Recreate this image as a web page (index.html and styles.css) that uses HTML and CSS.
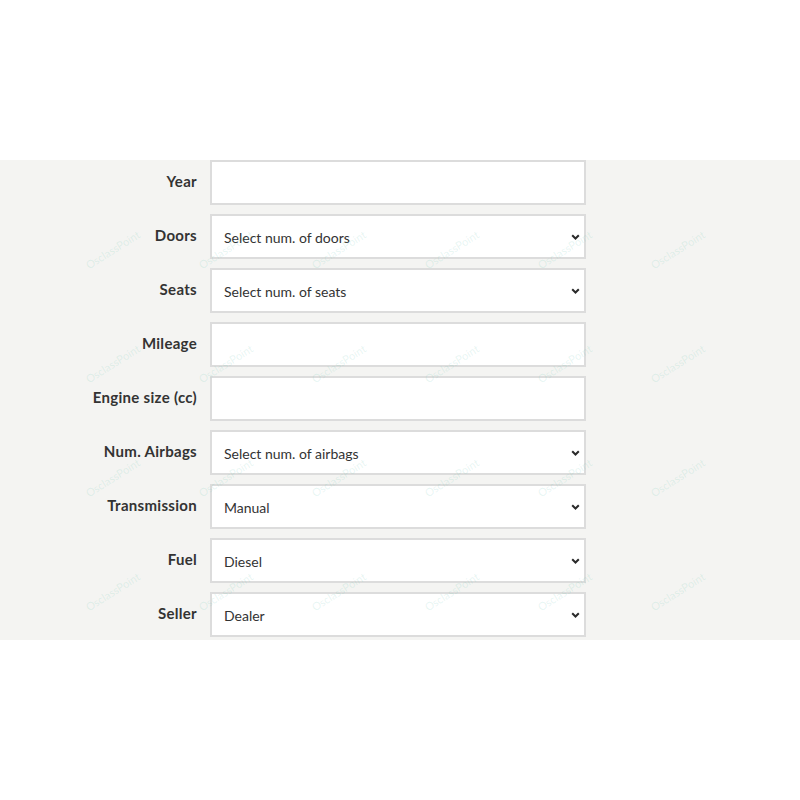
FILE: index.html
```html
<!DOCTYPE html>
<html>
<head>
<meta charset="utf-8">
<link rel="stylesheet" href="styles.css">
</head>
<body>
<div class="band">
  <div class="marks">
    <span>OsclassPoint</span><span>OsclassPoint</span><span>OsclassPoint</span><span>OsclassPoint</span><span>OsclassPoint</span><span>OsclassPoint</span>
    <span>OsclassPoint</span><span>OsclassPoint</span><span>OsclassPoint</span><span>OsclassPoint</span><span>OsclassPoint</span><span>OsclassPoint</span>
    <span>OsclassPoint</span><span>OsclassPoint</span><span>OsclassPoint</span><span>OsclassPoint</span><span>OsclassPoint</span><span>OsclassPoint</span>
    <span>OsclassPoint</span><span>OsclassPoint</span><span>OsclassPoint</span><span>OsclassPoint</span><span>OsclassPoint</span><span>OsclassPoint</span>
  </div>
  <div class="form">
    <div class="row"><label>Year</label><div class="box"></div></div>
    <div class="row"><label>Doors</label><div class="box sel"><span>Select num. of doors</span><svg width="9" height="6" viewBox="0 0 9 6"><path d="M1.2 1.2l3.3 3.3 3.3-3.3" fill="none" stroke="#2a2a2a" stroke-width="2"/></svg></div></div>
    <div class="row"><label>Seats</label><div class="box sel"><span>Select num. of seats</span><svg width="9" height="6" viewBox="0 0 9 6"><path d="M1.2 1.2l3.3 3.3 3.3-3.3" fill="none" stroke="#2a2a2a" stroke-width="2"/></svg></div></div>
    <div class="row"><label>Mileage</label><div class="box"></div></div>
    <div class="row"><label>Engine size (cc)</label><div class="box"></div></div>
    <div class="row"><label>Num. Airbags</label><div class="box sel"><span>Select num. of airbags</span><svg width="9" height="6" viewBox="0 0 9 6"><path d="M1.2 1.2l3.3 3.3 3.3-3.3" fill="none" stroke="#2a2a2a" stroke-width="2"/></svg></div></div>
    <div class="row"><label>Transmission</label><div class="box sel"><span>Manual</span><svg width="9" height="6" viewBox="0 0 9 6"><path d="M1.2 1.2l3.3 3.3 3.3-3.3" fill="none" stroke="#2a2a2a" stroke-width="2"/></svg></div></div>
    <div class="row"><label>Fuel</label><div class="box sel"><span>Diesel</span><svg width="9" height="6" viewBox="0 0 9 6"><path d="M1.2 1.2l3.3 3.3 3.3-3.3" fill="none" stroke="#2a2a2a" stroke-width="2"/></svg></div></div>
    <div class="row"><label>Seller</label><div class="box sel"><span>Dealer</span><svg width="9" height="6" viewBox="0 0 9 6"><path d="M1.2 1.2l3.3 3.3 3.3-3.3" fill="none" stroke="#2a2a2a" stroke-width="2"/></svg></div></div>
  </div>
</div>
</body>
</html>
```
FILE: styles.css
```css
html, body {
  margin: 0;
  padding: 0;
  background: #ffffff;
  font-family: Lato, "Open Sans", sans-serif;
}
body {
  padding-top: 160px;
  height: 640px;
}
.band {
  position: relative;
  background: #f4f4f2;
  height: 480px;
  overflow: hidden;
}
.marks {
  position: absolute;
  left: 108px;
  top: 73px;
  display: grid;
  grid-template-columns: repeat(6, 113px);
  grid-auto-rows: 114px;
  pointer-events: none;
  z-index: 2;
}
.marks span {
  display: block;
  width: 70px;
  font-size: 11px;
  color: rgba(80, 190, 160, 0.14);
  transform: rotate(-32deg);
  transform-origin: center;
  white-space: nowrap;
}
.form {
  display: flex;
  flex-direction: column;
  gap: 9px;
}
.row {
  display: flex;
  align-items: center;
  height: 45px;
}
.row label {
  width: 197px;
  text-align: right;
  font-weight: 700;
  font-size: 15px;
  letter-spacing: 0.3px;
  color: #333;
  padding-right: 13px;
  padding-bottom: 3px;
  box-sizing: content-box;
}
.box {
  width: 376px;
  height: 45px;
  box-sizing: border-box;
  background: #fff;
  border: 2px solid #dcdcdc;
  display: flex;
  align-items: center;
  justify-content: space-between;
  padding: 0 4px 0 12px;
  font-size: 14px;
  color: #333;
}
.box span {
  padding-top: 1px;
}
```
